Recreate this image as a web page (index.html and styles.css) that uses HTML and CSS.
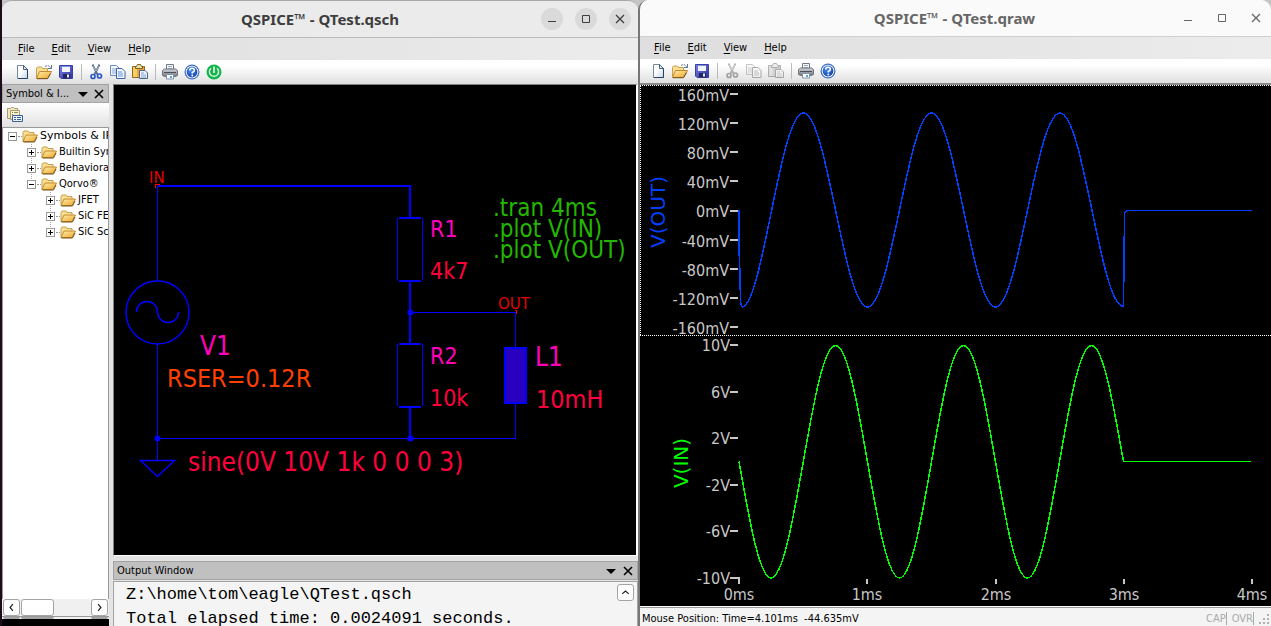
FILE: index.html
```html
<!DOCTYPE html>
<html lang="en">
<head>
<meta charset="utf-8">
<title>QSPICE</title>
<link rel="stylesheet" href="styles.css">
</head>
<body>
<svg class="defs" aria-hidden="true">
  <defs>
    <linearGradient id="gPage" x1="0" y1="0" x2="1" y2="1"><stop offset="0.4" stop-color="#fff"/><stop offset="1" stop-color="#c4d6ea"/></linearGradient>
    <linearGradient id="gFolder" x1="0" y1="0" x2="1" y2="1"><stop offset="0" stop-color="#fff0a8"/><stop offset="1" stop-color="#eea42c"/></linearGradient>
    <linearGradient id="gDisk" x1="0" y1="0" x2="1" y2="1"><stop offset="0" stop-color="#7c82e8"/><stop offset="1" stop-color="#2c309c"/></linearGradient>
    <linearGradient id="gPrint" x1="0" y1="0" x2="0" y2="1"><stop offset="0" stop-color="#d4d6dc"/><stop offset="1" stop-color="#70747e"/></linearGradient>
    <radialGradient id="gHelp" cx="0.4" cy="0.3" r="0.8"><stop offset="0" stop-color="#4a90f0"/><stop offset="1" stop-color="#0c38a8"/></radialGradient>
    <symbol id="new" viewBox="0 0 16 16">
      <path d="M3.500 1.500h6l4 4v9h-10z" fill="url(#gPage)" stroke="#76889e"/>
      <path d="M13.500 5v9.500H4" fill="none" stroke="#27405f"/>
      <path d="M9.500 1.500v4h4z" fill="#dfe8f2" stroke="#4a617e"/>
    </symbol>
    <symbol id="folder" viewBox="0 0 16 16">
      <path d="M1 13.500v-9l1-1.500h4l1 1.500h5v3" fill="#fbe093" stroke="#c79f50"/>
      <path d="M1 13.500l3-6.500h11.500l-3.500 6.500z" fill="url(#gFolder)" stroke="#c08a34"/>
      <path d="M1.500 14h11l2.500-5" fill="none" stroke="#735018"/>
    </symbol>
    <symbol id="open" viewBox="0 0 16 16">
      <path d="M.5 14.500v-10l1-1.500h4l1 1.500h5v3" fill="#fbe093" stroke="#c79f50"/>
      <path d="M.5 14.500l3-7h12l-4 7z" fill="url(#gFolder)" stroke="#c08a34"/>
      <path d="M1 14.700h10.500l3-5" fill="none" stroke="#735018"/>
      <path d="M9 2.500q3-2 5 .5l1 1" fill="none" stroke="#5d7699" stroke-dasharray="2 1"/>
      <path d="M12 4.500h3.500V1" fill="none" stroke="#5d7699"/>
    </symbol>
    <symbol id="save" viewBox="0 0 16 16">
      <path d="M1.500 1.500h13v13H3l-1.500-1.500z" fill="url(#gDisk)" stroke="#3b40a6"/>
      <path d="M4 2h8v6H4z" fill="#f1f4fc"/><path d="M4 2h8v1H4z" fill="#7b92d3"/>
      <path d="M5 10h7v4.500H5z" fill="#22265e"/><path d="M9 10.500h2v3H9z" fill="#e4e7f5"/>
    </symbol>
    <symbol id="cut" viewBox="0 0 16 16">
      <path d="M4.500.5l5 10M11.500.5l-5 10" fill="none" stroke="#586f91" stroke-width="1.800"/>
      <path d="M5 2l3 5M11 2L8 7" stroke="#bccbdd" stroke-width=".7"/>
      <circle cx="5" cy="12.500" r="2" fill="none" stroke="#2f5cc4" stroke-width="1.700"/>
      <circle cx="11.500" cy="12" r="2" fill="none" stroke="#2f5cc4" stroke-width="1.700"/>
    </symbol>
    <symbol id="copy" viewBox="0 0 16 16">
      <path d="M.5 1.500h6l3 3v7h-9z" fill="#f2f7fd" stroke="#6c8cc0"/><path d="M2 5h5M2 7h5M2 9h5" stroke="#84a6dc"/>
      <path d="M6.500 4.500h5.500l3 3v7H6.500z" fill="#f2f7fd" stroke="#41649f"/><path d="M8 8h4M8 10h5M8 12h5" stroke="#6590d4"/>
    </symbol>
    <symbol id="paste" viewBox="0 0 16 16">
      <path d="M.5 2.500h12v11H.5z" fill="#e9a832" stroke="#94651b"/><path d="M1 3h4v10H1z" fill="#f9cd68"/>
      <path d="M3.500 4.500v-2h1l1-2h3l1 2h1v2z" fill="#f0dfa8" stroke="#7c602b"/>
      <path d="M7.500 6.500H13l2.500 2.500v5.500h-8z" fill="#eaf1fb" stroke="#46638e"/><path d="M9 9h3M9 11h5M9 13h5" stroke="#87a4d0"/>
    </symbol>
    <symbol id="print" viewBox="0 0 16 16">
      <path d="M4.500 6V.5h7V6z" fill="#f5f6fa" stroke="#727986"/><path d="M6 2.500h4M6 4.500h4" stroke="#9eabc1"/>
      <path d="M.5 6.500l2-1.500h11l2 1.500v5l-2 1h-11l-2-1z" fill="url(#gPrint)" stroke="#70747e"/>
      <path d="M2 8.500h12" stroke="#4a4e57"/><path d="M4.500 10.500h7v4.500h-7z" fill="#fff" stroke="#8093aa"/>
      <path d="M8 12h2v2H8z" fill="#4fa4e8"/>
    </symbol>
    <symbol id="help" viewBox="0 0 16 16">
      <circle cx="8" cy="8" r="6.900" fill="#fff" stroke="#3f6ec4" stroke-width="1.200"/><circle cx="8" cy="8" r="5.400" fill="url(#gHelp)"/>
      <path d="M5.800 6.500q0-2.200 2.200-2.200 2.400 0 2.400 1.900Q10.400 7.500 8.300 8.500V9.500" fill="none" stroke="#fff" stroke-width="1.600"/><circle cx="8.300" cy="11.500" r="1" fill="#fff"/>
    </symbol>
    <symbol id="power" viewBox="0 0 16 16">
      <circle cx="8" cy="8" r="7.500" fill="#12b54a"/>
      <path d="M5 4.200A4.600 4.600 0 1 0 11 4.200" fill="none" stroke="#dff7e6" stroke-width="1.400"/><path d="M8 2.500v6.500" stroke="#fff" stroke-width="1.500"/>
    </symbol>
    <symbol id="lib" viewBox="0 0 16 16">
      <path d="M.5 1.500h3l1-1h2l1 1h3v10H.5z" fill="#f4e9b5" stroke="#a39b76"/>
      <path d="M3.500 3.500h9v9h-9z" fill="#f7efc6" stroke="#a39b76"/><path d="M5 5.500h1M5 7.500h1M5 9.500h1M7 5.500h4" stroke="#8b8564"/>
      <path d="M5.500 8.500h10v6h-10z" fill="#eaf1fb" stroke="#3c5e96"/><path d="M7 10.500h2M7 12.500h2M10 10.500h4M10 12.500h4" stroke="#3c5e96"/>
    </symbol>
    <symbol id="min" viewBox="0 0 22 22"><path d="M7 13.500h8" stroke="currentColor"/></symbol>
    <symbol id="max" viewBox="0 0 22 22"><path d="M7.500 7.500h7v7h-7z" fill="none" stroke="currentColor"/></symbol>
    <symbol id="close" viewBox="0 0 22 22"><path d="M7 7l8 8M15 7l-8 8" stroke="currentColor" stroke-width="1.300"/></symbol>
    <symbol id="down" viewBox="0 0 10 10"><path d="M0 3h10L5 8z" fill="#000"/></symbol>
    <symbol id="x" viewBox="0 0 10 10"><path d="M1 1l8 8M9 1L1 9" stroke="#000" stroke-width="1.600"/></symbol>
  </defs>
</svg>

<main class="window window-schematic">
  <header class="titlebar">
    <h1>QSPICE™ - QTest.qsch</h1>
    <div class="controls">
      <button aria-label="Minimize"><svg><use href="#min"/></svg></button>
      <button aria-label="Maximize"><svg><use href="#max"/></svg></button>
      <button aria-label="Close"><svg><use href="#close"/></svg></button>
    </div>
  </header>
  <nav class="menubar">
    <button><u>F</u>ile</button><button><u>E</u>dit</button><button><u>V</u>iew</button><button><u>H</u>elp</button>
  </nav>
  <div class="toolbar">
    <button aria-label="New"><svg><use href="#new"/></svg></button>
    <button aria-label="Open"><svg><use href="#open"/></svg></button>
    <button aria-label="Save"><svg><use href="#save"/></svg></button>
    <span class="sep"></span>
    <button aria-label="Cut"><svg><use href="#cut"/></svg></button>
    <button aria-label="Copy"><svg><use href="#copy"/></svg></button>
    <button aria-label="Paste"><svg><use href="#paste"/></svg></button>
    <span class="sep"></span>
    <button aria-label="Print"><svg><use href="#print"/></svg></button>
    <button aria-label="Help"><svg><use href="#help"/></svg></button>
    <button aria-label="Run"><svg><use href="#power"/></svg></button>
  </div>
  <div class="workspace">
    <aside class="side">
      <div class="dock-head">
        <h2>Symbol &amp; I...</h2>
        <button aria-label="Panel menu"><svg><use href="#down"/></svg></button>
        <button aria-label="Close panel"><svg><use href="#x"/></svg></button>
      </div>
      <div class="side-tools"><button aria-label="Library"><svg><use href="#lib"/></svg></button></div>
      <ul class="tree">
        <li><div class="row root"><button class="toggle" aria-label="Collapse"></button><svg><use href="#folder"/></svg><span>Symbols &amp; IP</span></div>
          <ul>
            <li><div class="row"><button class="toggle plus" aria-label="Expand"></button><svg><use href="#folder"/></svg><span>Builtin Symbols</span></div></li>
            <li><div class="row"><button class="toggle plus" aria-label="Expand"></button><svg><use href="#folder"/></svg><span>Behavioral</span></div></li>
            <li><div class="row"><button class="toggle" aria-label="Collapse"></button><svg><use href="#folder"/></svg><span>Qorvo®</span></div>
              <ul>
                <li><div class="row"><button class="toggle plus" aria-label="Expand"></button><svg><use href="#folder"/></svg><span>JFET</span></div></li>
                <li><div class="row"><button class="toggle plus" aria-label="Expand"></button><svg><use href="#folder"/></svg><span>SiC FETs</span></div></li>
                <li><div class="row"><button class="toggle plus" aria-label="Expand"></button><svg><use href="#folder"/></svg><span>SiC Schottky</span></div></li>
              </ul>
            </li>
          </ul>
        </li>
      </ul>
      <div class="scroll">
        <button aria-label="Scroll left"><svg viewBox="0 0 16 16"><path d="M9.500 4.500L6.500 8l3 3.500"/></svg></button>
        <span class="thumb"></span>
        <button aria-label="Scroll right"><svg viewBox="0 0 16 16"><path d="M6.500 4.500L9.500 8l-3 3.500"/></svg></button>
      </div>
      <div class="scroll-edge"><i></i><i class="mid"></i><i></i></div>
      <div class="side-void"></div>
    </aside>
    <section class="content">
      <div class="canvas">
        <svg viewBox="114 85 522 470" preserveAspectRatio="xMinYMin meet" role="img" aria-label="Schematic">
          <g class="wire thin">
            <path d="M157.500 186v95M157.500 344v116M157 438.500h359M410 312.500h106M515.500 313v34M515.500 403v36"/>
            <path d="M397.500 218v62M422.500 218v62M397.500 344v62M422.500 344v62"/>
          </g>
          <g class="pins"><path d="M155.500 188v-3.500h4M514.500 310.500h2v3"/></g>
          <g class="wire thick">
            <path d="M158 186h253M410 185v33M410 280v64M410 406v33M399 218h22M399 281h22M399 344h22M399 407h22"/>
            <path class="coil" d="M505 348h21v55h-21z"/>
          </g>
          <g class="wire round">
            <circle cx="157.500" cy="312.500" r="31.500"/>
            <path d="M136.500 312a10.500 10.500 0 0 1 21 0a10.500 10.500 0 0 0 21 0M140.500 460.500h34L157.500 476.500z"/>
          </g>
          <g class="dots"><circle cx="157.500" cy="438.500" r="3"/><circle cx="410.500" cy="312.500" r="3"/><circle cx="410.500" cy="438.500" r="3"/></g>
          <g class="net"><text x="149" y="183">IN</text><text x="498" y="309">OUT</text></g>
          <g class="name">
            <text class="mid-text" x="430" y="237">R1</text><text class="mid-text" x="430" y="364">R2</text>
            <text class="big-text" x="200" y="355">V1</text><text class="big-text" x="535" y="366">L1</text>
          </g>
          <g class="value">
            <text class="mid-text" x="430" y="279">4k7</text><text class="mid-text" x="430" y="406">10k</text>
            <text class="wide-text" x="536" y="408">10mH</text><text class="big-text" x="188" y="471">sine(0V 10V 1k 0 0 0 3)</text>
          </g>
          <text class="param wide-text" x="167" y="387">RSER=0.12R</text>
          <g class="directive"><text x="493" y="216">.tran 4ms</text><text x="493" y="237">.plot V(IN)</text><text x="493" y="258">.plot V(OUT)</text></g>
        </svg>
      </div>
      <div class="dock-head output-head">
        <h2>Output Window</h2>
        <button aria-label="Output menu"><svg><use href="#down"/></svg></button>
        <button aria-label="Close output"><svg><use href="#x"/></svg></button>
      </div>
      <div class="output">
        <pre>Z:\home\tom\eagle\QTest.qsch
Total elapsed time: 0.0024091 seconds.</pre>
        <button aria-label="Scroll up"><svg viewBox="0 0 16 16"><path d="M4.500 9.500L8 6.500l3.500 3"/></svg></button>
      </div>
    </section>
  </div>
</main>

<section class="window window-plot">
  <header class="titlebar">
    <h1>QSPICE™ - QTest.qraw</h1>
    <div class="controls">
      <button aria-label="Minimize"><svg><use href="#min"/></svg></button>
      <button aria-label="Maximize"><svg><use href="#max"/></svg></button>
      <button aria-label="Close"><svg><use href="#close"/></svg></button>
    </div>
  </header>
  <nav class="menubar">
    <button><u>F</u>ile</button><button><u>E</u>dit</button><button><u>V</u>iew</button><button><u>H</u>elp</button>
  </nav>
  <div class="toolbar">
    <button aria-label="New"><svg><use href="#new"/></svg></button>
    <button aria-label="Open"><svg><use href="#open"/></svg></button>
    <button aria-label="Save"><svg><use href="#save"/></svg></button>
    <span class="sep"></span>
    <button disabled aria-label="Cut"><svg><use href="#cut"/></svg></button>
    <button disabled aria-label="Copy"><svg><use href="#copy"/></svg></button>
    <button disabled aria-label="Paste"><svg><use href="#paste"/></svg></button>
    <span class="sep"></span>
    <button aria-label="Print"><svg><use href="#print"/></svg></button>
    <button aria-label="Help"><svg><use href="#help"/></svg></button>
  </div>
  <div class="plots">
    <svg viewBox="640 85 631 521" preserveAspectRatio="xMinYMin meet" role="img" aria-label="Waveforms">
      <path class="focus" d="M640 85.500h631M640 335.500h631M640.500 86v249"/>
      <path class="ticks" d="M730 94h8M730 123h8M730 152h8M730 181h8M730 211h8M730 240h8M730 269h8M730 298h8M730 327h8M730 345h8M730 392h8M730 438h8M730 485h8M730 531h8M730 578h9M739 577v7M867 579v5M996 579v5M1124 579v5M1252 579v5"/>
      <g class="axis end">
        <text x="729" y="101">160mV</text><text x="729" y="130">120mV</text><text x="729" y="159">80mV</text><text x="729" y="188">40mV</text><text x="729" y="217">0mV</text><text x="729" y="247">-40mV</text><text x="729" y="276">-80mV</text><text x="729" y="305">-120mV</text><text x="729" y="334">-160mV</text>
        <text x="730" y="351">10V</text><text x="730" y="398">6V</text><text x="730" y="444">2V</text><text x="730" y="491">-2V</text><text x="730" y="537">-6V</text><text x="730" y="584">-10V</text>
      </g>
      <g class="axis middle"><text x="739" y="600">0ms</text><text x="867" y="600">1ms</text><text x="996" y="600">2ms</text><text x="1124" y="600">3ms</text><text x="1252" y="600">4ms</text></g>
      <text class="trace-name out" transform="translate(665 212) rotate(-90)">V(OUT)</text>
      <text class="trace-name in" transform="translate(688 463) rotate(-90)">V(IN)</text>
      <path class="trace out-line" d="M739 210v46M739.500 256L740.500 300Q741 307 742 307C763 305 780 113 803.500 113C827 113 844 307 867.500 307C891 307 908 113 931.500 113C955 113 972 307 995.500 307C1019 307 1036 113 1060 113C1083 113 1100 300 1122 306L1123.500 306L1124.500 214Q1125 210.500 1129 210.500H1252"/>
      <path class="trace in-line" d="M739 461.500C749.500 521 759.500 578 771 578C794.500 578 812 345.500 835.500 345.500C859 345.500 876 578 899.500 578C923 578 940 345.500 963.500 345.500C987 345.500 1004 578 1027.500 578C1051 578 1068 345.500 1091.500 345.500C1103 345.500 1113 402 1123.500 461.500H1251"/>
    </svg>
  </div>
  <footer class="status">
    <span class="position">Mouse Position: Time=4.101ms&nbsp; -44.635mV</span>
    <span class="flag">CAP</span><span class="flag">OVR</span>
    <svg viewBox="0 0 12 12"><path d="M8 1h2v2H8zM4 5h2v2H4zM8 5h2v2H8zM0 9h2v2H0zM4 9h2v2H4zM8 9h2v2H8z"/></svg>
  </footer>
</section>
</body>
</html>
```
FILE: styles.css
```css
* { box-sizing: border-box; }
body {
  margin: 0;
  height: 100vh;
  border-left: 2px solid #1c0d1a;
  display: grid;
  grid-template-columns: 636fr 633fr;
  grid-template-rows: 100vh;
  overflow: hidden;
  background: #c4c4c4;
  font-family: "DejaVu Sans Condensed", "DejaVu Sans", sans-serif;
  font-size: 11px;
  color: #000;
}
button {
  padding: 0;
  border: 0;
  background: none;
  font: inherit;
  color: inherit;
}
svg { display: block; }
.defs { position: absolute; width: 0; height: 0; }

.window {
  min-width: 0;
  min-height: 0;
  display: flex;
  flex-direction: column;
  background: #e6e6e6;
  overflow: hidden;
}
.window-schematic {
  border-top: 1px solid #a8a8a8;
  border-radius: 10px 10px 0 0;
  background: #e4e4e4;
}
.window-plot {
  border-left: 2px solid #777;
  border-radius: 10px 10px 0 0;
}

.titlebar {
  flex: none;
  height: 37px;
  display: grid;
  grid-template-columns: 1fr auto 1fr;
  align-items: center;
  padding: 0 7px;
  background: #ebebeb;
  border-bottom: 1px solid #bababa;
  color: #3d3d3d;
}
.titlebar h1 {
  grid-column: 2;
  margin: 0;
  font: bold 15px/20px "Noto Sans", sans-serif;
}
.controls { justify-self: end; display: flex; gap: 12px; }
.controls button, .controls svg { width: 22px; height: 22px; }
.controls button { border-radius: 50%; background: #dadada; }
.window-plot .titlebar { padding: 0 4px 0 2px; background: #fafafa; border-color: #d0d0d0; color: #666; }
.window-plot .controls button { background: none; }

.menubar {
  flex: none;
  height: 22px;
  display: flex;
  gap: 17px;
  padding: 0 0 2px 16px;
  background: linear-gradient(90deg, #dedede, #ececec);
}
.window-plot .menubar { padding-left: 14px; }
.menubar u { text-underline-offset: 2px; }

.toolbar {
  flex: none;
  height: 24px;
  display: flex;
  align-items: center;
  padding-left: 9px;
  background: linear-gradient(#fff 25%, #dfdfdf);
}
.window-plot .toolbar { padding-left: 7px; }
.toolbar button { width: 22px; height: 22px; display: grid; place-items: center; }
.toolbar svg, .side-tools svg, .row svg { width: 16px; height: 16px; }
.toolbar button:disabled svg { filter: grayscale(1); opacity: .5; }
.sep { width: 8px; height: 16px; background: linear-gradient(#bbb, #bbb) 4px 0 / 1px 16px no-repeat; }

.workspace {
  flex: 1;
  min-height: 0;
  display: grid;
  grid-template-columns: 107px 1fr;
  gap: 4px;
}
.side, .content { min-width: 0; min-height: 0; display: flex; flex-direction: column; }

.dock-head {
  flex: none;
  height: 19px;
  display: flex;
  align-items: center;
  gap: 6px;
  padding: 0 4px 0 3px;
  background: #c0c0c0;
  border: 1px solid #a2a2a2;
}
.dock-head h2 { flex: 1; margin: 0; font-size: 11px; font-weight: normal; line-height: 16px; white-space: nowrap; }
.dock-head svg { width: 10px; height: 10px; }
.side-tools {
  flex: none;
  height: 24px;
  padding: 4px 5px;
  background: linear-gradient(#fff, #e2e2e2);
}
.tree {
  flex: 1;
  min-height: 0;
  margin: 0;
  padding: 0 0 0 5px;
  border: 1px solid #999;
  border-bottom: 0;
  background: #fff;
  overflow: hidden;
  list-style: none;
}
.tree ul { margin: 0; padding: 0 0 0 19px; list-style: none; }
.row { height: 16px; display: flex; align-items: center; white-space: nowrap; }
.row::before { content: ""; order: 1; flex: none; width: 4px; margin-left: 1px; border-top: 1px dotted #999; }
.row svg { order: 2; flex: none; }
.row span { order: 3; padding-left: 2px; line-height: 18px; }
.row.root span { font-family: "DejaVu Sans", sans-serif; }
.toggle {
  flex: none;
  position: relative;
  width: 9px;
  height: 9px;
  border: 1px solid #999;
  background: #fff;
}
.toggle::before, .toggle.plus::after { content: ""; position: absolute; left: 1px; top: 3px; width: 5px; height: 1px; background: #000; }
.toggle.plus::after { left: 3px; top: 1px; width: 1px; height: 5px; }
.tree ul > li { background: repeating-linear-gradient(#aaa 0 1px, transparent 1px 2px) 4px 0 / 1px 16px repeat-y; }
.tree ul > li:last-child { background-size: 1px 8px; background-repeat: no-repeat; }

.scroll { flex: none; height: 17px; display: flex; gap: 1px; padding: 0 1px; background: #f0f0f0; }
.scroll button, .thumb, .output button { border: 1px solid #a4a4a4; border-radius: 3px; background: #fff; }
.scroll button { width: 17px; }
.scroll button:last-child { margin-left: auto; }
.scroll svg, .output svg { width: 15px; height: 15px; fill: none; stroke: #222; stroke-width: 1.300; }
.thumb { width: 33px; }
.scroll-edge { flex: none; height: 3px; display: flex; gap: 1px; padding: 0 1px; background: #f0f0f0; border-top: 1px solid #999; }
.scroll-edge i { width: 17px; border: 1px solid #a4a4a4; border-radius: 0 0 3px 3px; }
.scroll-edge .mid { width: 33px; }
.scroll-edge i:last-child { margin-left: auto; }
.side-void { flex: none; height: 7px; background: #000; }

.canvas {
  flex: 1;
  min-height: 0;
  border: 1px solid #fff;
  border-width: 1px 2px 1px 1px;
  border-top-color: #808080;
  border-left-color: #808080;
  background: #000;
}
.canvas svg, .plots svg { width: 100%; height: 100%; }
.wire { stroke: #00f; fill: none; }
.thin, .thick, .pins { shape-rendering: crispEdges; }
.thick { stroke-width: 2px; }
.round { stroke-width: 1.500px; }
.coil { fill: #2a00c0; }
.dots { fill: #00f; }
.pins { fill: none; stroke: #f00; }
.net { fill: #e00000; font: 15px "DejaVu Sans", sans-serif; }
.name { fill: #f0b; }
.value { fill: #ff003c; }
.param { fill: #ff4000; }
.directive { fill: #22b800; font-size: 24px; }
.mid-text { font-size: 23px; }
.wide-text { font-size: 25px; }
.big-text { font-size: 26px; }

.output-head { margin-top: 5px; gap: 7px; }
.output {
  flex: none;
  height: 45px;
  margin-top: 1px;
  display: flex;
  justify-content: space-between;
  align-items: flex-start;
  padding: 1px 3px 0 12px;
  border: 1px solid #a2a2a2;
  border-bottom: 0;
  background: #f4f4f4;
}
.output pre { margin: 0; font: 17px/24px "Liberation Mono", monospace; }
.output button { width: 17px; height: 17px; margin-top: 1px; }

.plots {
  flex: 1;
  min-height: 0;
  border-top: 2px solid #8a8a8a;
  border-bottom: 1px solid #fff;
  background: #000;
}
.focus { stroke: #fff; stroke-dasharray: 1 1; shape-rendering: crispEdges; }
.ticks { stroke: #c8c8c8; stroke-width: 2px; shape-rendering: crispEdges; }
.axis { fill: #c8c8c8; font-size: 16px; }
.end { text-anchor: end; }
.middle { text-anchor: middle; }
.trace-name { font: 20px "DejaVu Sans", sans-serif; text-anchor: middle; }
.out { fill: #0040ff; }
.in { fill: #0f0; }
.trace { fill: none; stroke-width: 1.500px; shape-rendering: crispEdges; }
.out-line { stroke: #0040ff; }
.in-line { stroke: #0f0; }

.status {
  flex: none;
  height: 19px;
  display: flex;
  align-items: center;
  gap: 5px;
  padding-left: 2px;
  padding-top: 3px;
  border-top: 1px solid #999;
  background: #f4f4f4;
}
.position { flex: 1; }
.flag { color: #aaa; border-right: 1px solid #aaa; }
.status svg { width: 12px; height: 12px; fill: #b0b0b0; }
```
